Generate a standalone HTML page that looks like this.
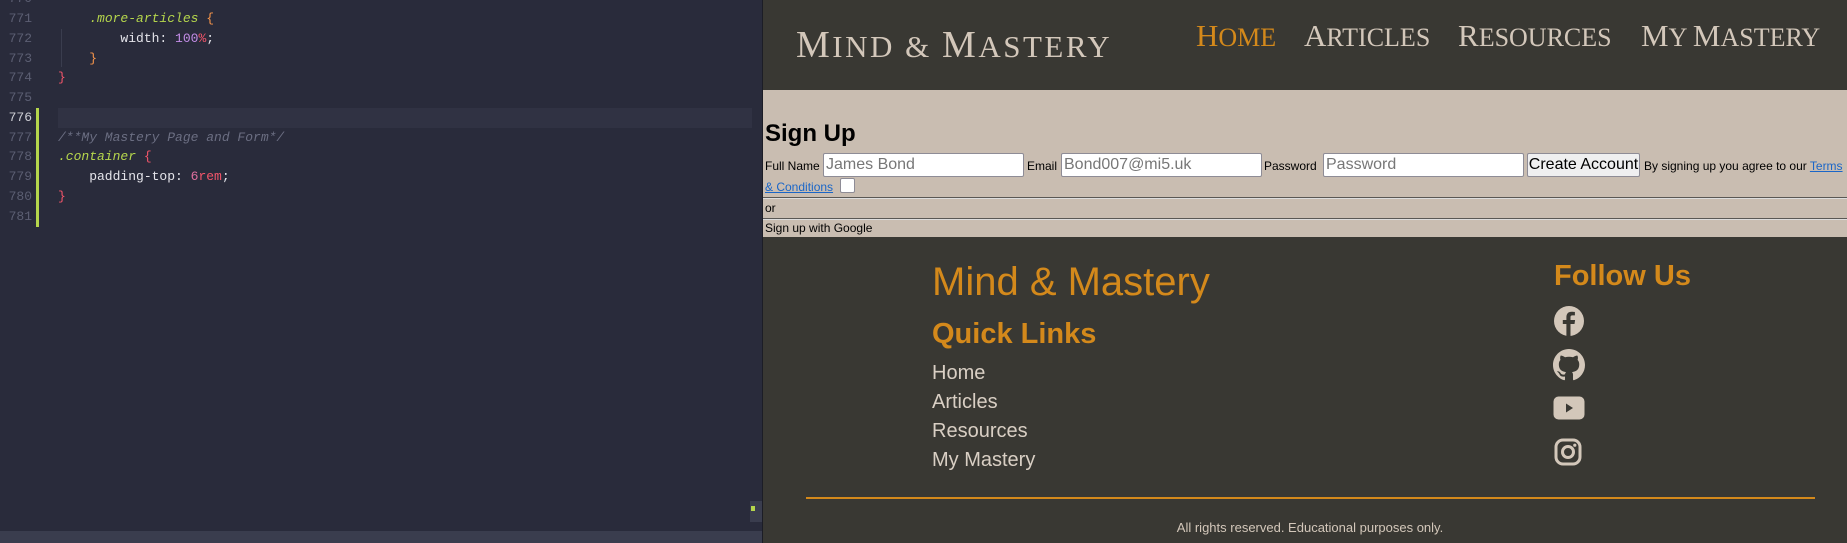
<!DOCTYPE html>
<html><head><meta charset="utf-8"><style>
*{margin:0;padding:0;box-sizing:border-box}
body{width:1847px;height:543px;overflow:hidden;position:relative;background:#292b3b;font-family:"Liberation Sans",sans-serif}
.ed{position:absolute;left:0;top:0;width:762px;height:543px;background:#292b3b;font-family:"Liberation Mono",monospace;font-size:13px}
.ln{position:absolute;left:0;width:32px;text-align:right;color:#5c5f73;height:20px;line-height:20px}
.cd{position:absolute;left:58px;height:20px;line-height:20px;color:#e4e4ea;white-space:pre}
.sel{color:#b5d64c;font-style:italic}.ob{color:#f7954a}.rb{color:#f3556a}.num{color:#c48de8}.cm{color:#6b6e82;font-style:italic}
.site{position:absolute;left:763px;top:0;width:1084px;height:543px;background:#393833}
.sc{font-family:"Liberation Serif",serif;text-transform:uppercase;color:#d3c7ba;position:absolute;white-space:nowrap;line-height:1}
.sc b{font-weight:normal}
.form{position:absolute;left:0;top:90px;width:1084px;height:147px;background:#c9bdb1;color:#000}
.inp{position:absolute;top:63px;height:24px;width:201px;background:#fff;border:1px solid #8e8c96;border-radius:2px;font-size:16px;color:#777;padding-left:2px;line-height:22px}
.lab{position:absolute;top:69px;font-size:12px}
.hr{position:absolute;left:0;width:1084px;height:2px;background:#5a5855;border-bottom:1px solid #ddd}
.fl{position:absolute;left:169px;font-size:20px;color:#d9cfc4}
</style></head><body>
<div class="ed">
<div class="ln" style="top:-11px">770</div>
<div class="ln" style="top:9px">771</div><div class="cd" style="top:9px">    <span class="sel">.more-articles</span> <span class="ob">{</span></div>
<div class="ln" style="top:29px">772</div><div class="cd" style="top:29px">        width: <span class="num">100</span><span class="rb">%</span>;</div>
<div class="ln" style="top:49px">773</div><div class="cd" style="top:49px">    <span class="ob">}</span></div>
<div class="ln" style="top:68px">774</div><div class="cd" style="top:68px"><span class="rb">}</span></div>
<div class="ln" style="top:88px">775</div>
<div style="position:absolute;left:58px;top:108px;width:694px;height:20px;background:#303243"></div>
<div class="ln" style="top:108px;color:#cfd0d6">776</div>
<div class="ln" style="top:128px">777</div><div class="cd" style="top:128px"><span class="cm">/**My Mastery Page and Form*/</span></div>
<div class="ln" style="top:147px">778</div><div class="cd" style="top:147px"><span class="sel">.container</span> <span class="rb">{</span></div>
<div class="ln" style="top:167px">779</div><div class="cd" style="top:167px">    padding-top: <span class="num" style="color:#e070a0">6</span><span class="rb">rem</span>;</div>
<div class="ln" style="top:187px">780</div><div class="cd" style="top:187px"><span class="rb">}</span></div>
<div class="ln" style="top:207px">781</div>
<div style="position:absolute;left:36px;top:108px;width:3px;height:119px;background:#b5d64c"></div>
<div style="position:absolute;left:61px;top:29px;width:1px;height:38px;background:#3a3d4e"></div>
<div style="position:absolute;left:750px;top:501px;width:12px;height:21px;background:#3a3d4e"></div>
<div style="position:absolute;left:751px;top:506px;width:4px;height:5px;background:#b5d64c"></div>
<div style="position:absolute;left:0;top:531px;width:762px;height:12px;background:#3a3d4e"></div>
</div>
<div style="position:absolute;left:762px;top:0;width:1px;height:543px;background:#1c1d26"></div>
<div class="site">
<div class="sc" style="left:33px;top:26px;font-size:31px;letter-spacing:2.5px"><b style="font-size:38px">M</b>ind &amp; <b style="font-size:38px">M</b>astery</div>
<div class="sc" style="left:433px;top:20px;font-size:26px;color:#d4891b"><b style="font-size:31px">H</b>ome</div>
<div class="sc" style="left:541px;top:20px;font-size:26px"><b style="font-size:31px">A</b>rticles</div>
<div class="sc" style="left:695px;top:20px;font-size:26px"><b style="font-size:31px">R</b>esources</div>
<div class="sc" style="left:878px;top:20px;font-size:26px"><b style="font-size:31px">M</b>y <b style="font-size:31px">M</b>astery</div>
<div class="form">
<div style="position:absolute;left:2px;top:30px;font-size:24px;font-weight:bold">Sign Up</div>
<div class="lab" style="left:2px">Full Name</div><div class="inp" style="left:60px">James Bond</div>
<div class="lab" style="left:264px">Email</div><div class="inp" style="left:298px">Bond007@mi5.uk</div>
<div class="lab" style="left:501px">Password</div><div class="inp" style="left:560px">Password</div>
<div style="position:absolute;left:764px;top:63px;width:113px;height:24px;background:#efeff0;border:1px solid #8e8c96;border-radius:2px;font-size:16px;line-height:22px;text-align:center">Create Account</div>
<div class="lab" style="left:881px;white-space:nowrap">By signing up you agree to our <span style="color:#1a66c8;text-decoration:underline">Terms</span></div>
<div class="lab" style="left:2px;top:90px;color:#1a66c8;text-decoration:underline">&amp; Conditions</div>
<div style="position:absolute;left:77px;top:88px;width:15px;height:15px;background:#fff;border:1px solid #8e8c96;border-radius:2px"></div>
<div class="hr" style="top:107px"></div>
<div style="position:absolute;left:2px;top:111px;font-size:12px">or</div>
<div class="hr" style="top:128px"></div>
<div style="position:absolute;left:2px;top:131px;font-size:12px">Sign up with Google</div>
</div>
<div style="position:absolute;left:169px;top:260px;font-size:40px;color:#d4891b">Mind &amp; Mastery</div>
<div style="position:absolute;left:169px;top:318px;font-size:29px;font-weight:bold;color:#d4891b">Quick Links</div>
<div class="fl" style="top:362px">Home</div>
<div class="fl" style="top:391px">Articles</div>
<div class="fl" style="top:420px">Resources</div>
<div class="fl" style="top:449px">My Mastery</div>
<div style="position:absolute;left:791px;top:260px;font-size:29px;font-weight:bold;color:#d4891b">Follow Us</div>
<svg style="position:absolute;left:790px;top:305px" width="32" height="32" viewBox="0 0 32 32"><circle cx="16" cy="16" r="15" fill="#d3c7ba"/><path d="M17.5 31V19h4l.6-4h-4.6v-2.6c0-1.2.4-2 2-2h2.4V7c-.5-.1-1.8-.2-3.300-.2-3.300 0-5.200 2-5.200 5.400V15h-3.600v4h3.600v12z" fill="#393833"/></svg>
<svg style="position:absolute;left:790px;top:349px" width="32" height="32" viewBox="0 0 16 16"><path fill="#d3c7ba" d="M8 0C3.580 0 0 3.580 0 8c0 3.540 2.290 6.530 5.470 7.590.4.070.550-.170.550-.380 0-.190-.010-.820-.010-1.490-2.010.370-2.530-.490-2.690-.940-.090-.230-.480-.940-.820-1.130-.280-.150-.680-.520-.010-.530.630-.010 1.080.580 1.230.820.720 1.210 1.870.870 2.330.660.070-.520.280-.870.510-1.070-1.780-.2-3.640-.890-3.640-3.950 0-.870.310-1.590.820-2.150-.080-.2-.360-1.020.080-2.120 0 0 .670-.210 2.200.820.640-.180 1.320-.270 2-.270.680 0 1.360.090 2 .270 1.530-1.040 2.200-.820 2.200-.820.440 1.100.160 1.920.080 2.120.510.560.820 1.270.820 2.150 0 3.070-1.870 3.750-3.650 3.950.290.250.540.730.540 1.480 0 1.070-.010 1.930-.010 2.200 0 .210.150.460.550.380A8.010 8.010 0 0016 8c0-4.420-3.580-8-8-8z"/></svg>
<svg style="position:absolute;left:790px;top:396px" width="32" height="24" viewBox="0 0 32 24"><rect x="0.5" y="0.5" width="31" height="23" rx="5" fill="#d3c7ba"/><path d="M13 7.5v9l7-4.5z" fill="#393833"/></svg>
<svg style="position:absolute;left:791px;top:438px" width="28" height="28" viewBox="0 0 28 28"><rect x="2" y="2" width="24" height="24" rx="7" fill="none" stroke="#d3c7ba" stroke-width="3"/><circle cx="14" cy="14" r="5.5" fill="none" stroke="#d3c7ba" stroke-width="3"/><circle cx="20.8" cy="7.2" r="1.6" fill="#d3c7ba"/></svg>
<div style="position:absolute;left:43px;top:497px;width:1009px;height:2px;background:#d4891b"></div>
<div style="position:absolute;left:0;width:1094px;top:520px;text-align:center;font-size:13px;color:#d3c7ba">All rights reserved. Educational purposes only.</div>
</div>
</body></html>
